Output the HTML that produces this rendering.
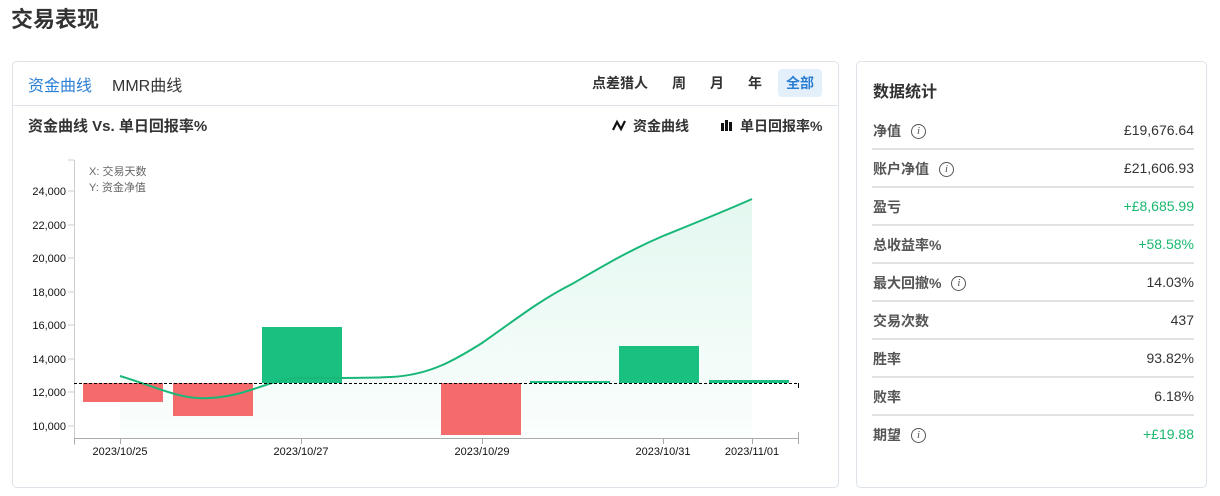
<!DOCTYPE html>
<html><head><meta charset="utf-8"><style>
*{margin:0;padding:0;box-sizing:border-box}
body{width:1220px;height:496px;background:#fff;font-family:"Liberation Sans","Noto Sans CJK SC",sans-serif;color:#333;position:relative;overflow:hidden}
.a{position:absolute;white-space:nowrap}
.card{position:absolute;border:1px solid #dde3e8;border-radius:5px;background:#fff}
.row{position:absolute;left:872px;width:322px;height:38px;font-size:14px}
.row .l{position:absolute;left:1px;top:9px;color:#555;font-weight:bold;display:flex;align-items:center;height:20px}
.row .v{position:absolute;right:0;top:10px;color:#333}
.row .g{color:#19b86e}
.row.d{border-bottom:2px solid #e2e2e2}
.i{display:inline-block;width:15px;height:15px;border:1px solid #555;border-radius:50%;font-size:11px;line-height:13px;text-align:center;font-style:italic;font-weight:normal;margin-left:10px;font-family:"Liberation Serif",serif}
</style></head><body>
<div class="a" style="left:11px;top:2px;font-size:22px;font-weight:bold;color:#333">交易表现</div>

<div class="card" style="left:12px;top:61px;width:827px;height:427px"></div>
<div class="a" style="left:13px;top:105px;width:825px;border-top:1px solid #dde3e8"></div>
<div class="a" style="left:28px;top:72px;font-size:16px;color:#2a7fd4">资金曲线</div>
<div class="a" style="left:112px;top:72px;font-size:16px;color:#333">MMR曲线</div>
<div class="a" style="left:592px;top:73px;font-size:14px;font-weight:bold;color:#333">点差猎人</div>
<div class="a" style="left:672px;top:73px;font-size:14px;font-weight:bold;color:#333">周</div>
<div class="a" style="left:710px;top:73px;font-size:14px;font-weight:bold;color:#333">月</div>
<div class="a" style="left:748px;top:73px;font-size:14px;font-weight:bold;color:#333">年</div>
<div class="a" style="left:778px;top:69px;width:44px;height:28px;background:#e3f0fb;border-radius:4px;font-size:14px;font-weight:bold;color:#2a7fd4;text-align:center;line-height:28px">全部</div>
<div class="a" style="left:28px;top:115px;font-size:15px;font-weight:bold;color:#333">资金曲线 Vs. 单日回报率%</div>
<div class="a" style="left:633px;top:116px;font-size:14px;font-weight:bold;color:#333">资金曲线</div>
<div class="a" style="left:740px;top:116px;font-size:14px;font-weight:bold;color:#333">单日回报率%</div>
<svg class="a" style="left:0;top:0" width="1220" height="496">
<defs><linearGradient id="gr" x1="0" y1="0" x2="0" y2="1"><stop offset="0" stop-color="#19c07f" stop-opacity="0.12"/><stop offset="1" stop-color="#19c07f" stop-opacity="0.02"/></linearGradient></defs>
<path d="M613,130 L617,122 L621,129 L625,121" fill="none" stroke="#111" stroke-width="2.2"/>
<rect x="721" y="123" width="3" height="8" fill="#111"/><rect x="725" y="120" width="3" height="11" fill="#111"/><rect x="729" y="122" width="3" height="9" fill="#111"/>
<g font-size="11" fill="#111" text-anchor="end" font-family="Liberation Sans,sans-serif">
<text x="66" y="195">24,000</text><text x="66" y="229">22,000</text><text x="66" y="262">20,000</text><text x="66" y="296">18,000</text><text x="66" y="329">16,000</text><text x="66" y="363">14,000</text><text x="66" y="396">12,000</text><text x="66" y="430">10,000</text></g>
<g stroke="#ccc" stroke-width="1"><line x1="68" y1="191" x2="74" y2="191"/><line x1="68" y1="225" x2="74" y2="225"/><line x1="68" y1="258" x2="74" y2="258"/><line x1="68" y1="292" x2="74" y2="292"/><line x1="68" y1="325" x2="74" y2="325"/><line x1="68" y1="359" x2="74" y2="359"/><line x1="68" y1="392" x2="74" y2="392"/><line x1="68" y1="426" x2="74" y2="426"/>
<line x1="68" y1="160" x2="74" y2="160"/></g>
<line x1="74.5" y1="160" x2="74.5" y2="445" stroke="#ccc"/>
<text x="89" y="175" font-size="11" fill="#666">X: 交易天数</text>
<text x="89" y="191" font-size="11" fill="#666">Y: 资金净值</text>
<path d="M120,376 C160,388 180,400 210,398 C250,396 270,378 301,378 C340,378 370,378 391,377 C430,375 455,360 482,343 C515,320 540,300 572,284 C605,265 630,250 663,236 C700,221 725,211 752,199 L752,438 L120,438 Z" fill="url(#gr)"/>
<rect x="83" y="383" width="80" height="19" fill="#f56b6b"/>
<rect x="173" y="383" width="80" height="33" fill="#f56b6b"/>
<rect x="262" y="327" width="80" height="56" fill="#19c07f"/>
<rect x="441" y="383" width="80" height="52" fill="#f56b6b"/>
<rect x="530" y="381" width="80" height="2" fill="#19c07f"/>
<rect x="619" y="346" width="80" height="37" fill="#19c07f"/>
<rect x="709" y="380" width="80" height="3" fill="#19c07f"/>
<path d="M120,376 C160,388 180,400 210,398 C250,396 270,378 301,378 C340,378 370,378 391,377 C430,375 455,360 482,343 C515,320 540,300 572,284 C605,265 630,250 663,236 C700,221 725,211 752,199" fill="none" stroke="#19b878" stroke-width="2"/>
<line x1="74" y1="383.5" x2="798" y2="383.5" stroke="#000" stroke-dasharray="3,2"/>
<line x1="798.5" y1="383" x2="798.5" y2="388" stroke="#000"/>
<line x1="74" y1="438.5" x2="798" y2="438.5" stroke="#aaa"/>
<g stroke="#aaa"><line x1="74.5" y1="438" x2="74.5" y2="444"/><line x1="120.5" y1="438" x2="120.5" y2="444"/><line x1="301.5" y1="438" x2="301.5" y2="444"/><line x1="482.5" y1="438" x2="482.5" y2="444"/><line x1="663.5" y1="438" x2="663.5" y2="444"/><line x1="752.5" y1="438" x2="752.5" y2="444"/><line x1="798.5" y1="432" x2="798.5" y2="444"/></g>
<g font-size="11" fill="#111" text-anchor="middle" font-family="Liberation Sans,sans-serif">
<text x="120" y="455">2023/10/25</text><text x="301" y="455">2023/10/27</text><text x="482" y="455">2023/10/29</text><text x="663" y="455">2023/10/31</text><text x="752" y="455">2023/11/01</text></g>
</svg>

<div class="card" style="left:856px;top:61px;width:351px;height:427px"></div>
<div class="a" style="left:873px;top:78px;font-size:16px;font-weight:bold;color:#333">数据统计</div>
<div class="row d" style="top:112px"><span class="l">净值<span class="i">i</span></span><span class="v">£19,676.64</span></div>
<div class="row d" style="top:150px"><span class="l">账户净值<span class="i">i</span></span><span class="v">£21,606.93</span></div>
<div class="row d" style="top:188px"><span class="l">盈亏</span><span class="v g">+£8,685.99</span></div>
<div class="row d" style="top:226px"><span class="l">总收益率%</span><span class="v g">+58.58%</span></div>
<div class="row d" style="top:264px"><span class="l">最大回撤%<span class="i">i</span></span><span class="v">14.03%</span></div>
<div class="row d" style="top:302px"><span class="l">交易次数</span><span class="v">437</span></div>
<div class="row d" style="top:340px"><span class="l">胜率</span><span class="v">93.82%</span></div>
<div class="row d" style="top:378px"><span class="l">败率</span><span class="v">6.18%</span></div>
<div class="row" style="top:416px"><span class="l">期望<span class="i">i</span></span><span class="v g">+£19.88</span></div>
</body></html>
